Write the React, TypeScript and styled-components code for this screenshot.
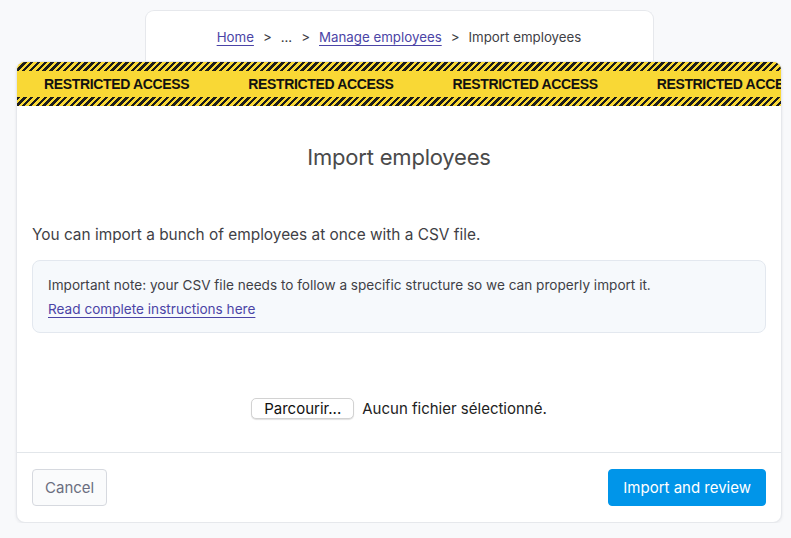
import styled, { createGlobalStyle } from "styled-components";

const GlobalStyle = createGlobalStyle`
  body {
    margin: 0;
    background: #f8f9fb;
    font-family: Inter, "Noto Sans", sans-serif;
    color: #3f3f46;
  }
`;

const Page = styled.div`
  width: 766px;
  margin-left: 16px;
  padding-top: 10px;
  display: flex;
  flex-direction: column;
  align-items: center;
`;

const Breadcrumb = styled.nav`
  width: 509px;
  height: 51px;
  box-sizing: border-box;
  background: #fff;
  border: 1px solid #e6e8ec;
  border-bottom: none;
  border-radius: 9px 9px 0 0;
  display: flex;
  align-items: center;
  justify-content: center;
  font-size: 13.3px;
  color: #3f3f46;
  padding-top: 1px;
`;

const Crumb = styled.a`
  color: #4b44a6;
  text-decoration: underline;
  text-underline-offset: 3px;
`;

const Sep = styled.span`
  margin: 0 9px;
`;

const Card = styled.div`
  width: 766px;
  box-sizing: border-box;
  background: #fff;
  border: 1px solid #e6e8ec;
  border-radius: 9px;
  overflow: hidden;
  box-shadow: 0 1px 3px rgba(20, 30, 50, 0.08);
`;

const Tape = styled.div`
  background: #f9d835;
  display: flex;
  flex-direction: column;
`;

const Hazard = styled.div`
  height: 9px;
  background: repeating-linear-gradient(
    135deg,
    #1c1c1c 0 2.4px,
    #f9d835 2.4px 4.8px
  );
`;

const TapeText = styled.div`
  height: 26px;
  display: flex;
  align-items: center;
  gap: 59px;
  padding-left: 27px;
  white-space: nowrap;
  overflow: hidden;
  font-family: "Liberation Sans", Arial, sans-serif;
  font-weight: 700;
  font-size: 14px;
  letter-spacing: -0.35px;
  color: #111;
`;

const Body = styled.div`
  padding: 0 15px;
  display: flex;
  flex-direction: column;
`;

const Title = styled.h1`
  margin: 38px 0 0;
  font-size: 22px;
  font-weight: 400;
  text-align: center;
  color: #4a4a4a;
  line-height: 26px;
  letter-spacing: -0.2px;
`;

const Lead = styled.p`
  margin: 54px 0 0;
  font-size: 15.4px;
  line-height: 22px;
  color: #3f3f46;
`;

const Note = styled.div`
  margin-top: 14px;
  padding: 12px 15px 11px;
  background: #f6f9fc;
  border: 1px solid #e3e8ef;
  border-radius: 8px;
  font-size: 13.6px;
  line-height: 24px;
  color: #3f3f46;
`;

const NoteLink = styled.a`
  color: #4b44a6;
  text-decoration: underline;
  text-underline-offset: 3px;
`;

const FileRow = styled.div`
  margin: 65px 0 33px;
  display: flex;
  justify-content: center;
  align-items: center;
  gap: 8px;
  font-size: 15px;
  color: #222;
`;

const BrowseButton = styled.button`
  height: 21px;
  padding: 0 12px;
  background: #fff;
  border: 1px solid #d2d2d2;
  border-radius: 5px;
  box-shadow: 0 1px 1px rgba(0, 0, 0, 0.12);
  font-family: inherit;
  font-size: 15px;
  color: #111;
`;

const Footer = styled.div`
  border-top: 1px solid #e2e6ea;
  padding: 16px 15px 16px;
  display: flex;
  justify-content: space-between;
`;

const Button = styled.button<{ $primary?: boolean }>`
  height: 37px;
  padding: 0 ${({ $primary }) => ($primary ? "14px" : "12px")};
  border-radius: 4px;
  font-family: Inter, sans-serif;
  font-size: 15px;
  border: 1px solid ${({ $primary }) => ($primary ? "#0095e9" : "#d6d9df")};
  background: ${({ $primary }) => ($primary ? "#0095e9" : "#fafbfc")};
  color: ${({ $primary }) => ($primary ? "#fff" : "#6b6e80")};
`;

export default function App() {
  return (
    <>
      <GlobalStyle />
      <Page>
        <Breadcrumb>
          <Crumb href="#">Home</Crumb>
          <Sep>&gt;</Sep>
          <span>...</span>
          <Sep>&gt;</Sep>
          <Crumb href="#">Manage employees</Crumb>
          <Sep>&gt;</Sep>
          <span>Import employees</span>
        </Breadcrumb>
        <Card>
          <Tape>
            <Hazard />
            <TapeText>
              {[0, 1, 2, 3].map((i) => (
                <span key={i}>RESTRICTED ACCESS</span>
              ))}
            </TapeText>
            <Hazard />
          </Tape>
          <Body>
            <Title>Import employees</Title>
            <Lead>You can import a bunch of employees at once with a CSV file.</Lead>
            <Note>
              Important note: your CSV file needs to follow a specific structure so we can properly import it.
              <br />
              <NoteLink href="#">Read complete instructions here</NoteLink>
            </Note>
            <FileRow>
              <BrowseButton>Parcourir...</BrowseButton>
              <span>Aucun fichier sélectionné.</span>
            </FileRow>
          </Body>
          <Footer>
            <Button>Cancel</Button>
            <Button $primary>Import and review</Button>
          </Footer>
        </Card>
      </Page>
    </>
  );
}
